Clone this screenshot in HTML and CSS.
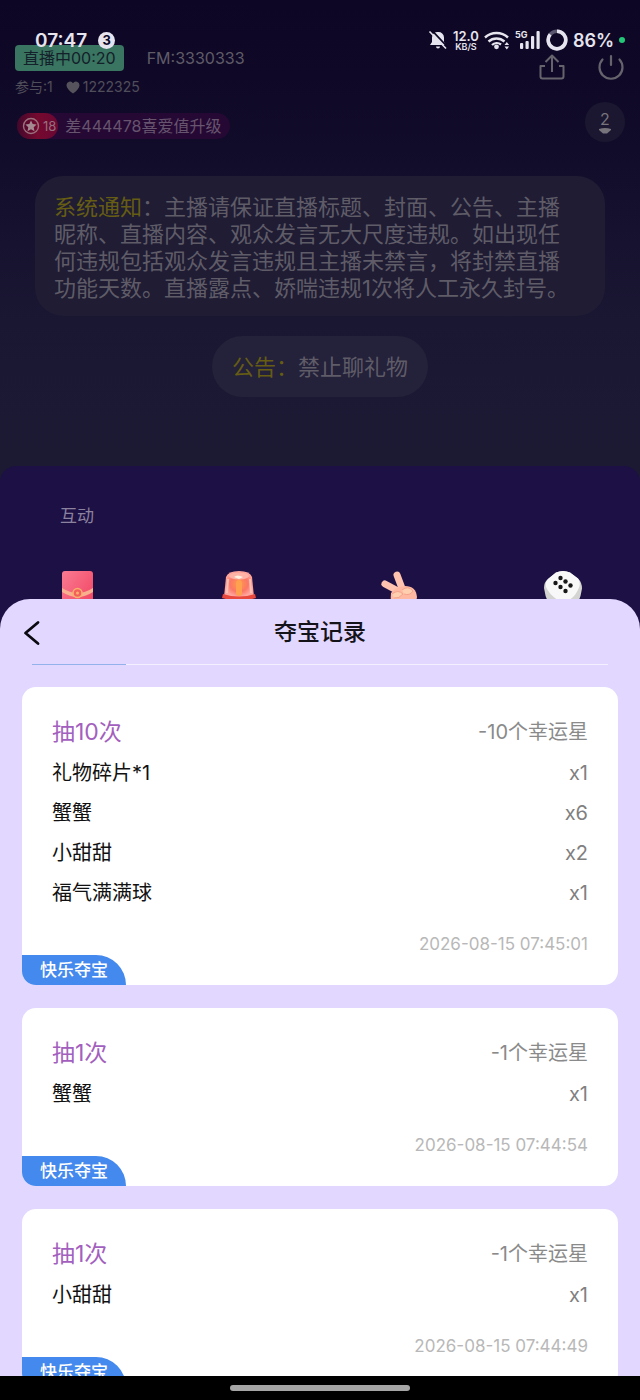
FILE: index.html
```html
<!DOCTYPE html>
<html lang="zh-CN">
<head>
<meta charset="utf-8">
<meta name="viewport" content="width=device-width, initial-scale=1">
<title>夺宝记录</title>
<link rel="stylesheet" href="styles.css">
</head>
<body>
<div class="phone">
  <div class="status">
    <div class="status-side">
      <span class="clock">07:47</span>
      <span class="notif-count">3</span>
    </div>
    <div class="status-side status-right">
      <svg width="20" height="20" viewBox="0 0 20 20" aria-hidden="true"><path d="M10 2a5.500 5.500 0 0 0-6 5.500v4.500l-2 3h16l-2-3V7.500A5.500 5.500 0 0 0 10 2zM8 16.500h4a2 2 0 0 1-4 0z" fill="#e6e4ee"/><path d="M3.500 0l16 17" stroke="#0d0724" stroke-width="1.800"/><path d="M1.500 1.500l16.500 17" stroke="#e6e4ee" stroke-width="1.600"/></svg>
      <span class="speed"><b>12.0</b><small>KB/S</small></span>
      <svg width="26" height="20" viewBox="0 0 26 20" fill="none" aria-hidden="true"><path d="M1 7.500a17 17 0 0 1 23 0M4.500 11.500a12 12 0 0 1 16 0M8 15a7 7 0 0 1 9-.5" stroke="#e6e4ee" stroke-width="2.400"/><circle cx="12.500" cy="16.800" r="2.400" fill="#e6e4ee"/><path d="M20.500 15l2.300-3 2.300 3zM20.500 16.500l2.300 3 2.300-3z" fill="#e6e4ee"/></svg>
      <span class="signal"><small>5G</small><svg width="24" height="20" viewBox="0 0 24 20" fill="#e6e4ee" aria-hidden="true"><rect x="3" y="13" width="3.200" height="6" rx="1"/><rect x="8.500" y="11" width="3.200" height="8" rx="1"/><rect x="14" y="6" width="3.200" height="13" rx="1"/><rect x="19.500" y="1" width="3.200" height="18" rx="1"/></svg></span>
      <svg width="22" height="22" viewBox="0 0 22 22" fill="none" stroke-width="3.600" aria-hidden="true"><circle cx="11" cy="11" r="8.800" stroke="#5b5670"/><path d="M11 2.200a8.800 8.800 0 1 1-6.800 3.200" stroke="#e6e4ee"/></svg>
      <span class="battery">86%</span>
      <i class="dot"></i>
    </div>
  </div>

  <main class="room">
    <header class="room-head">
      <div class="head-left">
        <div class="live-row"><span class="live">直播中00:20</span><span>FM:3330333</span></div>
        <div class="people"><span>参与:1</span><span class="likes"><svg width="14" height="13" viewBox="0 0 14 13" aria-hidden="true"><path d="M7 12.500C3 9.500.5 7 .5 4.200A3.500 3.500 0 0 1 7 2.300a3.500 3.500 0 0 1 6.500 1.900C13.500 7 11 9.500 7 12.500z" fill="#56535c"/></svg>1222325</span></div>
        <div class="level"><span class="level-badge"><svg width="18" height="18" viewBox="0 0 18 18" aria-hidden="true"><circle cx="9" cy="9" r="7.500" fill="none" stroke="#9a707c" stroke-width="1.400"/><path d="M9 3.500l1.700 3.600 3.900.5-2.900 2.700.8 3.900L9 12.300l-3.500 1.900.8-3.900-2.900-2.700 3.900-.5z" fill="#a58a92"/></svg>18</span><span>差444478喜爱值升级</span></div>
      </div>
      <div class="head-right">
        <div class="tools">
          <button class="tool" aria-label="分享"><svg width="28" height="28" viewBox="0 0 28 28" fill="none" stroke="#66636d" stroke-width="2" stroke-linejoin="round"><path d="M7 13H2.500v10.500q0 2 2 2h19q2 0 2-2V13H21M14 19V3M7.500 9L14 2.500 20.500 9"/></svg></button>
          <button class="tool" aria-label="关闭直播"><svg width="28" height="28" viewBox="0 0 28 28" fill="none" stroke="#66636d" stroke-width="2.200" stroke-linecap="round"><path d="M14 3v9M5.500 6.500a11.500 11.500 0 1 0 17 0"/></svg></button>
        </div>
        <div class="viewers"><span>2</span><svg width="12" height="6" viewBox="0 0 12 6" aria-hidden="true"><path d="M0 1q6-2 12 0v1L8 5.500H4L0 2z" fill="#77747c"/></svg></div>
      </div>
    </header>
    <p class="notice"><em>系统通知</em>：主播请保证直播标题、封面、公告、主播昵称、直播内容、观众发言无大尺度违规。如出现任何违规包括观众发言违规且主播未禁言，将封禁直播功能天数。直播露点、娇喘违规1次将人工永久封号。</p>
    <p class="announce"><em>公告：</em>禁止聊礼物</p>
    <section class="panel">
      <h2>互动</h2>
      <div class="games">
        <svg width="36" height="44" viewBox="0 0 36 44" role="img" aria-label="红包"><defs><linearGradient id="red" x1="0" y1="0" x2="1" y2="1"><stop stop-color="#fb7b92"/><stop offset="1" stop-color="#ef3f5d"/></linearGradient></defs><rect x="2" y="0" width="31" height="42" rx="3" fill="url(#red)"/><path d="M2 17q8 5 15.500 5T33 17v4q-8 5-15.500 5T2 21z" fill="#f9b08e"/><circle cx="17.500" cy="22" r="4.500" fill="#f4605c" stroke="#f8b070" stroke-width="1.500"/><circle cx="17.500" cy="22" r="1.500" fill="#f8b070"/></svg>
        <svg width="36" height="44" viewBox="0 0 36 44" role="img" aria-label="警报"><defs><radialGradient id="lamp"><stop stop-color="#ff9b4c"/><stop offset=".6" stop-color="#fb7766"/><stop offset="1" stop-color="#ffa79f"/></radialGradient></defs><path d="M5 6Q7 0 18 0t13 6l2 20H3z" fill="url(#lamp)"/><ellipse cx="18" cy="5" rx="10" ry="3.500" fill="#ffb3a6"/><path d="M13 6q3-3 9 0l-4 2z" fill="#fff0df"/><path d="M7 8L6 22M29 8l1 14" stroke="#ffc2b6" stroke-width="2"/><path d="M18 12v10" stroke="#ffa14e" stroke-width="6" stroke-linecap="round"/><path d="M2 23q16 5 32 0l1 4q-17 6-34 0z" fill="#e9483f"/><path d="M3 28q15 3 30 0v10H3z" fill="#9c4f36"/></svg>
        <svg width="38" height="44" viewBox="0 0 38 44" role="img" aria-label="猜拳"><g stroke-linecap="round" stroke="#ffc4b0"><path d="M16 4l6 16" stroke-width="7"/><path d="M4 13l15 8" stroke-width="7"/></g><path d="M10 22q4-6 14-7 11 0 12 11l-3 16H17q-9-10-7-20z" fill="#ffb9a2"/><path d="M11 23q6-5 11 0-4 5-9 4M21 19q6-5 11 1-3 5-9 3" fill="#ffcfaf" stroke="#f3a38c" stroke-width="1"/></svg>
        <svg width="38" height="44" viewBox="0 0 38 44" role="img" aria-label="骰子"><path d="M12 1.500q7-3 14 0l8 6q4 4 4 10-1 8-4 14-7 7-15 7T4 31Q1 25 0 17q0-6 4-9z" fill="#d4d4d2"/><path d="M12 1.500q7-3 14 0l8 6q3 4 1 9-3 8-9 12-7 3-13 0Q5 23 2 16q-1-5 2-8z" fill="#f8f8f8"/><g fill="#181818"><circle cx="16.500" cy="7" r="2.200"/><circle cx="21.500" cy="10.500" r="2.200"/><circle cx="26.500" cy="14.500" r="2.200"/><circle cx="11.500" cy="12" r="2.200"/><circle cx="16.500" cy="16" r="2.200"/><circle cx="21.500" cy="20" r="2.200"/></g></svg>
      </div>
    </section>
  </main>

  <section class="sheet">
    <header class="sheet-head">
      <button class="back" aria-label="返回"><svg width="20" height="26" viewBox="0 0 20 26" fill="none" stroke="#0b0a10" stroke-width="2.800" stroke-linecap="round" stroke-linejoin="round"><path d="M16 2.500L3.500 13 16 23.500"/></svg></button>
      <h1>夺宝记录</h1>
    </header>
    <div class="tabline"><i></i></div>
    <div class="list">
      <article class="card">
        <div class="card-head"><h3>抽10次</h3><span>-10个幸运星</span></div>
        <ul>
          <li><span>礼物碎片*1</span><b>x1</b></li>
          <li><span>蟹蟹</span><b>x6</b></li>
          <li><span>小甜甜</span><b>x2</b></li>
          <li><span>福气满满球</span><b>x1</b></li>
        </ul>
        <time datetime="2026-08-15T07:45:01">2026-08-15 07:45:01</time>
        <span class="tag">快乐夺宝</span>
      </article>
      <article class="card">
        <div class="card-head"><h3>抽1次</h3><span>-1个幸运星</span></div>
        <ul>
          <li><span>蟹蟹</span><b>x1</b></li>
        </ul>
        <time datetime="2026-08-15T07:44:54">2026-08-15 07:44:54</time>
        <span class="tag">快乐夺宝</span>
      </article>
      <article class="card">
        <div class="card-head"><h3>抽1次</h3><span>-1个幸运星</span></div>
        <ul>
          <li><span>小甜甜</span><b>x1</b></li>
        </ul>
        <time datetime="2026-08-15T07:44:49">2026-08-15 07:44:49</time>
        <span class="tag">快乐夺宝</span>
      </article>
    </div>
  </section>
  <div class="navbar"><i></i></div>
</div>
</body>
</html>
```
FILE: styles.css
```css
* { box-sizing: border-box; }
body, h1, h2, h3, p, ul { margin: 0; padding: 0; }
body { font-family: Inter, "Noto Sans CJK SC", sans-serif; background: #000; }
ul { list-style: none; }
em, i { font-style: normal; }
button { border: 0; padding: 0; background: none; display: flex; cursor: pointer; }
svg { display: block; flex: none; }

.phone { position: relative; height: 100vh; display: flex; flex-direction: column; overflow: hidden; }

.status { position: absolute; top: 28px; left: 0; right: 0; height: 24px; padding: 0 15px 0 35px; display: flex; justify-content: space-between; color: #e6e4ee; }
.status-side { display: flex; align-items: center; gap: 11px; }
.status-right { gap: 5px; }
.clock { font-size: 19px; font-weight: 600; }
.notif-count { width: 17px; height: 17px; border-radius: 50%; background: #e6e4ee; color: #0d0724; font-size: 13px; font-weight: 700; line-height: 17px; text-align: center; }
.speed { display: flex; flex-direction: column; align-items: center; }
.speed b { font-size: 13px; line-height: 12px; font-weight: 600; }
.speed small { font-size: 9px; line-height: 9px; font-weight: 600; }
.signal { display: flex; position: relative; padding-left: 2px; }
.signal small { position: absolute; top: 0; left: 0; font-size: 9px; line-height: 9px; font-weight: 700; }
.battery { font-size: 18px; font-weight: 600; }
.dot { width: 6px; height: 6px; border-radius: 50%; background: #22c878; }

.room { flex: none; padding-top: 45px; color: #5f5c68; background: linear-gradient(#0d0624, #110c2a 150px, #1a1733 320px, #1c1a33 466px); }
.room-head { display: flex; justify-content: space-between; padding: 0 15px; }
.head-left { display: flex; flex-direction: column; align-items: flex-start; }
.live-row { display: flex; align-items: center; gap: 23px; font-size: 16px; line-height: 26px; }
.live { padding: 0 8px; border-radius: 4px; background: #397560; color: #14202a; }
.people { display: flex; gap: 13px; margin-top: 6px; font-size: 14px; line-height: 20px; color: #514e5b; }
.likes { display: flex; align-items: center; gap: 3px; }
.level { display: flex; align-items: center; gap: 7px; margin: 16px 0 0 2px; padding-right: 9px; border-radius: 13px; background: #250934; font-size: 16px; line-height: 26px; color: #67546f; }
.level-badge { display: flex; align-items: center; gap: 3px; padding: 0 2px 0 5px; border-radius: 13px; background: linear-gradient(90deg, #42082b, #75092f 50%, #6b0733); font-size: 13px; color: #94707f; }
.head-right { display: flex; flex-direction: column; align-items: flex-end; padding-top: 8px; }
.tools { display: flex; gap: 31px; }
.viewers { display: flex; flex-direction: column; align-items: center; justify-content: center; width: 40px; height: 40px; margin-top: 21px; border-radius: 50%; background: #1b1730; font-size: 16px; line-height: 18px; color: #77747c; }
.notice { margin: 34px 35px 0; padding: 18px 30px 14px 19px; border-radius: 28px; background: #1f1c34; font-size: 22px; line-height: 27px; }
.notice em, .announce em { color: #665c13; }
.announce { width: fit-content; margin: 20px auto 0; padding: 16px 20px 14px; border-radius: 31px; background: #24213a; font-size: 22px; line-height: 31px; }
.panel { margin-top: 69px; padding: 37px 58px 13px 60px; border-radius: 16px 16px 0 0; background: #1d1044; }
.panel h2 { font-size: 17px; font-weight: 400; line-height: 26px; color: #8b829f; }
.games { display: flex; justify-content: space-between; margin-top: 42px; }

.sheet { position: relative; flex: 1; min-height: 0; margin-top: -29px; display: flex; flex-direction: column; border-radius: 30px 30px 0 0; background: #e1d7ff; overflow: hidden; }
.sheet-head { display: grid; grid-template-columns: 1fr auto 1fr; align-items: center; padding: 17px 22px 15px; }
.sheet-head h1 { font-size: 23px; font-weight: 500; line-height: 33px; color: #15131a; }
.tabline { margin: 0 32px; background: #f4f0ff; }
.tabline i { display: block; width: 94px; height: 1px; background: #93b2ec; }
.list { flex: 1; min-height: 0; padding: 22px 22px 0; display: flex; flex-direction: column; gap: 23px; overflow: hidden; }
.card { flex: none; display: flex; flex-direction: column; padding: 25px 30px 0; border-radius: 14px; background: #fff; overflow: hidden; font-size: 20px; line-height: 40px; color: #111; }
.card-head, .card li { display: flex; justify-content: space-between; }
.card-head { margin-bottom: 1px; color: #8a8a8a; }
.card-head h3 { font-size: 23px; font-weight: 400; color: #a35fbe; }
.card b { font-weight: 400; color: #808080; }
.card time { margin-top: 20px; text-align: right; font-size: 17px; line-height: 22px; color: #b8b8b8; }
.tag { align-self: flex-start; margin-left: -30px; padding: 0 18px; border-radius: 0 30px 0 0; background: #4489ed; color: #fff; font-size: 17px; font-weight: 500; line-height: 30px; }

.navbar { flex: none; padding: 9px 0; background: #000; }
.navbar i { display: block; width: 28%; height: 6px; margin: 0 auto; border-radius: 3px; background: #a5a5a5; }
```
